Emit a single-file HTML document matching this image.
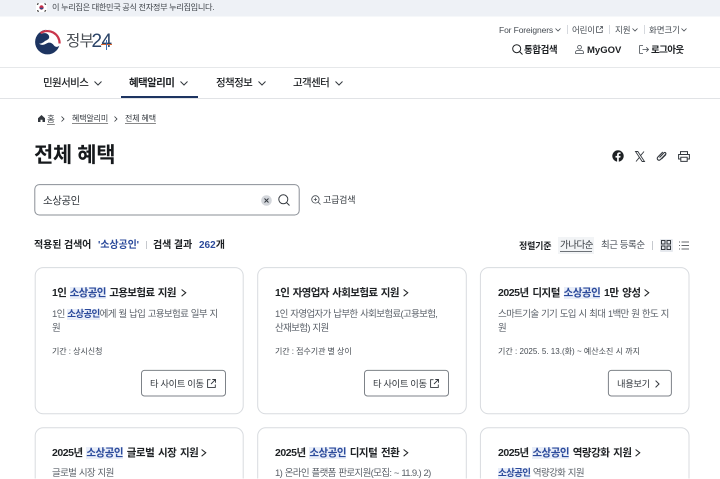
<!DOCTYPE html>
<html lang="ko"><head><meta charset="utf-8"><title>전체 혜택</title>
<style>
*{box-sizing:border-box}
html,body{margin:0;padding:0;width:720px;height:479px;overflow:hidden;background:#fff}
body{position:relative;font-family:"Liberation Sans","Noto Sans CJK KR",sans-serif;color:#1e2124}
#w{position:absolute;left:0;top:0;width:720px;height:479px;overflow:hidden}
.t{position:absolute;white-space:nowrap;line-height:14px;height:14px}
.b{font-weight:700}
.box{position:absolute}
svg{position:absolute;overflow:visible}
.ct{font-size:10.5px;font-weight:700;letter-spacing:-.47px;word-spacing:1.2px;color:#1e2124}
.ct1{letter-spacing:-.6px;word-spacing:1px}
.ds{font-size:9.5px;color:#5a6068;letter-spacing:-.66px;word-spacing:.6px}
.pd{font-size:8px;color:#464c53;letter-spacing:-.05px}
mark{background:#e9eef9;color:#2b4a9b}
.btnt{font-size:9.3px;color:#33383e;letter-spacing:-.35px}
.st{fill:none;stroke:#33383e;stroke-width:1}
.chv{fill:none;stroke:#1e2124;stroke-width:1}
.nv{font-size:10.5px;font-weight:500;color:#1e2124;letter-spacing:-.6px}
</style></head><body><div id="w">
<div class="box" style="left:0;top:0;width:720px;height:16px;background:#eef1f6"></div>
<div class="box" style="left:0;top:16px;width:720px;height:1px;background:#f6f8fa"></div>
<svg style="left:36px;top:3px" width="11" height="9" viewBox="0 0 11 9"><rect width="11" height="9" fill="#fff"/><circle cx="5.5" cy="4.5" r="2.2" fill="#c8304a"/><path d="M3.4 4.8a2.2 2.2 0 0 0 4.2 0z" fill="#2a4a8a"/><path d="M1 1.5l1.5-1M1.2 7.5l1.5 1M8.5.6l1.5 1M8.5 8.4l1.5-1" stroke="#222" stroke-width="1.1"/></svg>
<div class="t" style="left:52px;top:1px;font-size:8.2px;color:#3f444a;letter-spacing:-.36px">이 누리집은 대한민국 공식 전자정부 누리집입니다.</div>

<svg style="left:34px;top:29px" width="27" height="26" viewBox="0 0 27 26">
<circle cx="13.500" cy="13" r="12.400" fill="#1d3461"/>
<path d="M13 .5C20 0 27.500 6 26.500 14C26 18 22 19 20 16.500C18 13.500 15 13 12.500 14.500C10 16 7 16.500 5 14.500C6.500 15 9 14 11 12C13 11 16 10 15 7C14 4 10 3.500 7 5C9 2.500 11 .7 13 .5z" fill="#fff"/>
<path d="M6.500 4.200A12.200 12.200 0 0 1 25.600 14.500" fill="none" stroke="#c9354b" stroke-width="2.200"/>
</svg>
<div class="t" style="left:66px;top:33px;height:18px;line-height:18px;font-size:15.500px;color:#4a4f55;letter-spacing:-.8px">정부</div>
<div class="t" style="left:91.500px;top:32px;height:20px;line-height:20px;font-size:19px;color:#2b4468;letter-spacing:-.6px">24</div>
<div class="box" style="left:101px;top:44px;width:11px;height:1px;background:#d9652f"></div>
<div class="box" style="left:106px;top:40px;width:1px;height:10px;background:#3d6db5"></div>

<div class="t" style="left:499px;top:23px;font-size:8.500px;color:#464c53;letter-spacing:-.12px">For Foreigners</div>
<svg style="left:555px;top:28px" width="6" height="4"><path d="M.5.500l2.500 2.500L5.500.5" fill="none" stroke="#464c53" stroke-width=".8"/></svg>
<div class="box" style="left:567px;top:25px;width:1px;height:9px;background:#d6d9de"></div>
<div class="t" style="left:572px;top:23px;font-size:8.500px;color:#464c53;letter-spacing:-.2px">어린이</div>
<svg style="left:596px;top:26px" width="7" height="7" viewBox="0 0 7 7"><path d="M3 .8H.6v5.600h5.600V4M3.500 3.500L6.400.6M4.200.5h2.300v2.300" fill="none" stroke="#464c53" stroke-width=".8"/></svg>
<div class="box" style="left:609px;top:25px;width:1px;height:9px;background:#d6d9de"></div>
<div class="t" style="left:615px;top:23px;font-size:8.500px;color:#464c53;letter-spacing:-.1px">지원</div>
<svg style="left:632px;top:28px" width="6" height="4"><path d="M.5.500l2.500 2.500L5.500.5" fill="none" stroke="#464c53" stroke-width=".8"/></svg>
<div class="box" style="left:644px;top:25px;width:1px;height:9px;background:#d6d9de"></div>
<div class="t" style="left:649px;top:23px;font-size:8.500px;color:#464c53;letter-spacing:-.1px">화면크기</div>
<svg style="left:681px;top:28px" width="6" height="4"><path d="M.5.500l2.500 2.500L5.500.5" fill="none" stroke="#464c53" stroke-width=".8"/></svg>

<svg style="left:512px;top:44px" width="11" height="11" viewBox="0 0 11 11"><circle cx="4.700" cy="4.700" r="4" fill="none" stroke="#1e2124" stroke-width="1"/><path d="M7.500 7.500l3 3" stroke="#1e2124" stroke-width="1"/></svg>
<div class="t b" style="left:524px;top:44px;font-size:9.500px;letter-spacing:-.45px">통합검색</div>
<svg style="left:575px;top:45px" width="9" height="9" viewBox="0 0 9 9"><circle cx="4.500" cy="2.300" r="1.900" fill="none" stroke="#464c53" stroke-width=".8"/><path d="M.6 8.500V7.400c0-1.300 1-2 2-2h3.800c1 0 2 .7 2 2v1.100z" fill="none" stroke="#464c53" stroke-width=".8"/></svg>
<div class="t b" style="left:587px;top:44px;font-size:9.500px;letter-spacing:0">MyGOV</div>
<svg style="left:639px;top:45px" width="10" height="9" viewBox="0 0 10 9"><path d="M4 .6H.6v7.800H4M3.500 4.500h6M7.300 2.300l2.200 2.200-2.200 2.200" fill="none" stroke="#464c53" stroke-width=".8"/></svg>
<div class="t b" style="left:651px;top:44px;font-size:9.500px;letter-spacing:-.6px">로그아웃</div>

<div class="box" style="left:0;top:67px;width:720px;height:1px;background:#e6e8ea"></div>
<div class="box" style="left:0;top:98px;width:720px;height:1px;background:#e1e3e6"></div>
<div class="box" style="left:121px;top:96px;width:77px;height:2px;background:#1d3461"></div>
<div class="t nv" style="left:43px;top:76px">민원서비스</div>
<svg style="left:94px;top:81px" width="8" height="5"><path d="M.5.500L4 4 7.500.5" class="st"/></svg>
<div class="t b" style="left:129px;top:76px;font-size:10.500px;color:#1e2124;letter-spacing:-.6px">혜택알리미</div>
<svg style="left:180px;top:81px" width="8" height="5"><path d="M.5.500L4 4 7.500.5" class="st"/></svg>
<div class="t nv" style="left:216px;top:76px">정책정보</div>
<svg style="left:257.500px;top:81px" width="8" height="5"><path d="M.5.500L4 4 7.500.5" class="st"/></svg>
<div class="t nv" style="left:293px;top:76px">고객센터</div>
<svg style="left:335px;top:81px" width="8" height="5"><path d="M.5.500L4 4 7.500.5" class="st"/></svg>

<svg style="left:38px;top:115px" width="7" height="7" viewBox="0 0 7 7"><path d="M3.500 0L7 3.200V7H4.500V4.800h-2V7H0V3.200z" fill="#33383e"/></svg>
<div class="t" style="left:47px;top:112px;font-size:8.500px;color:#33383e;text-decoration:underline;text-underline-offset:2px;text-decoration-color:#888">홈</div>
<svg style="left:61px;top:116px" width="4" height="6"><path d="M.5.500L3 3 .5 5.500" fill="none" stroke="#33383e" stroke-width=".8"/></svg>
<div class="t" style="left:72px;top:112px;font-size:8px;color:#33383e;letter-spacing:-.15px;text-decoration:underline;text-underline-offset:2px;text-decoration-color:#888">혜택알리미</div>
<svg style="left:114px;top:116px" width="4" height="6"><path d="M.5.500L3 3 .5 5.500" fill="none" stroke="#33383e" stroke-width=".8"/></svg>
<div class="t" style="left:125px;top:112px;font-size:8px;color:#33383e;letter-spacing:-.15px;text-decoration:underline;text-underline-offset:2px;text-decoration-color:#888">전체 혜택</div>

<div class="t b" style="left:34px;top:143px;height:26px;line-height:26px;font-size:21px;color:#16191c;letter-spacing:-.4px">전체 혜택</div>

<svg style="left:612px;top:150px" width="12" height="12" viewBox="0 0 12 12"><circle cx="6" cy="6" r="5.700" fill="#1e2124"/><path d="M6.800 12V7.600h1.500l.3-1.700H6.800V4.800c0-.5.200-.9.900-.9h.9V2.500c-1.900-.3-3.500 0-3.500 2.100v1.300H3.500v1.700h1.600V12z" fill="#fff"/></svg>
<svg style="left:635px;top:151px" width="10" height="11" viewBox="0 0 10 11"><path d="M.5.500h2.300l6.700 10H7.200zM9 .5L5.500 4.700M4.500 6.300L1 10.500" fill="none" stroke="#33383e" stroke-width=".9"/></svg>
<svg style="left:656px;top:150px" width="12" height="12" viewBox="0 0 12 12"><path d="M3.500 7.500L8 2.800c1-1 2.600.4 1.500 1.600L4.500 9.500c-1.900 1.900-4.500-.5-2.600-2.500L6.800 2" fill="none" stroke="#33383e" stroke-width="1.100"/><path d="M5.500 9l4.500-4.500" stroke="#33383e" stroke-width="1"/></svg>
<svg style="left:678px;top:151px" width="12" height="11" viewBox="0 0 12 11"><path d="M2.500 3.500V.6h7v2.900M2.500 8H.6V3.500h10.800V8H9.500M2.800 6.200h6.400v4.200H2.800z" fill="none" stroke="#33383e" stroke-width="1"/></svg>

<svg style="left:0;top:0" width="720" height="479">
<rect x="34.800" y="184.600" width="264.400" height="30.400" rx="4.500" fill="#fff" stroke="#8a8f96"/>
<g fill="#fff" stroke="#d8dbdf">
<rect x="35.200" y="267.600" width="208" height="146.200" rx="8"/>
<rect x="257.700" y="267.600" width="208.600" height="146.200" rx="8"/>
<rect x="480.400" y="267.600" width="208.600" height="146.200" rx="8"/>
<path d="M35.200 478.500V435.800a8 8 0 0 1 8-8H235.200a8 8 0 0 1 8 8V478.500"/>
<path d="M257.700 478.500V435.800a8 8 0 0 1 8-8H458.300a8 8 0 0 1 8 8V478.500"/>
<path d="M480.400 478.500V435.800a8 8 0 0 1 8-8H681a8 8 0 0 1 8 8V478.500"/>
</g>
<g fill="#fff" stroke="#7d8288">
<rect x="141.500" y="370.400" width="84" height="25.600" rx="3"/>
<rect x="364.500" y="370.400" width="84" height="25.600" rx="3"/>
<rect x="608.400" y="370.400" width="63" height="25.600" rx="3"/>
</g>
</svg>

<div class="t" style="left:43px;top:194px;font-size:10.500px;color:#33383e;letter-spacing:-.45px">소상공인</div>
<svg style="left:261px;top:195px" width="11" height="11" viewBox="0 0 11 11"><circle cx="5.500" cy="5.500" r="5.300" fill="#d3d6db"/><path d="M3.500 3.500l4 4M7.500 3.500l-4 4" stroke="#33383e" stroke-width="1"/></svg>
<svg style="left:278px;top:194px" width="12" height="12" viewBox="0 0 12 12"><circle cx="5.300" cy="5.300" r="4.500" fill="none" stroke="#33383e" stroke-width="1"/><path d="M8.500 8.500l3 3" stroke="#33383e" stroke-width="1"/></svg>
<svg style="left:311px;top:195px" width="10" height="10" viewBox="0 0 10 10"><circle cx="4.400" cy="4.400" r="3.700" fill="none" stroke="#464c53" stroke-width=".8"/><path d="M7 7l2.500 2.500M2.800 4.400h3.200M4.400 2.800V6" stroke="#464c53" stroke-width=".8"/></svg>
<div class="t" style="left:323px;top:193px;font-size:9px;color:#33383e;letter-spacing:-.2px">고급검색</div>

<div class="t" style="left:34px;top:239px;font-size:10px;font-weight:700;color:#1e2124;letter-spacing:-.1px">적용된 검색어</div>
<div class="t" style="left:98px;top:239px;font-size:10px;font-weight:700;color:#2b4a9b;letter-spacing:-.1px">'소상공인'</div>
<div class="box" style="left:146px;top:241px;width:1px;height:8px;background:#c6c9ce"></div>
<div class="t" style="left:153px;top:239px;font-size:10px;font-weight:700;color:#1e2124;letter-spacing:-.1px">검색 결과</div>
<div class="t" style="left:199px;top:239px;font-size:10px;font-weight:700;color:#2b4a9b;letter-spacing:0">262<span style="color:#1e2124">개</span></div>

<div class="t b" style="left:519px;top:239px;font-size:9px;letter-spacing:-.2px">정렬기준</div>
<div class="box" style="left:558px;top:237px;width:36px;height:17px;background:#f2f4f6"></div>
<div class="t" style="left:560px;top:239px;font-size:9.500px;color:#33383e;letter-spacing:-.5px">가나다순</div>
<div class="box" style="left:560px;top:251px;width:32px;height:1px;background:#6d7278"></div>
<div class="t" style="left:601px;top:239px;font-size:9.500px;color:#4a5058;letter-spacing:-.45px">최근 등록순</div>
<div class="box" style="left:652px;top:241px;width:1px;height:9px;background:#c6c9ce"></div>
<div class="box" style="left:660px;top:239px;width:13px;height:13px;background:#e6e9ee;border-radius:1px"></div>
<svg style="left:661px;top:240px" width="10" height="10" viewBox="0 0 10 10"><path d="M.5.500h3.500v3.500H.5zM6 .5h3.500v3.500H6zM.5 6h3.500v3.500H.5zM6 6h3.500v3.500H6z" fill="none" stroke="#33383e"/></svg>
<svg style="left:679px;top:241px" width="10" height="9" viewBox="0 0 10 9"><path d="M2.500 1H10M2.500 4.500H10M2.500 8H10M0 1h1M0 4.500h1M0 8h1" fill="none" stroke="#33383e" stroke-width=".8"/></svg>

<div class="t ct ct1" style="left:52px;top:286px">1인 <mark>소상공인</mark> 고용보험료 지원</div>
<svg style="left:181px;top:289px" width="6" height="8"><path d="M.6.500L4.800 3.800.6 7.200" class="chv"/></svg>
<div class="t ds" style="left:52px;top:308px">1인 <mark style="font-weight:700">소상공인</mark>에게 월 납입 고용보험료 일부 지</div>
<div class="t ds" style="left:52px;top:322px">원</div>
<div class="t pd" style="left:52px;top:345px">기간 : 상시신청</div>
<div class="t btnt" style="left:150px;top:377px">타 사이트 이동</div>
<svg style="left:207px;top:379px" width="9" height="9" viewBox="0 0 9 9"><path d="M3.500.7H.6v7.700h7.700V5.500M4 5L8.300.7M5.300.5h3.200v3.200" fill="none" stroke="#33383e" stroke-width=".9"/></svg>

<div class="t ct ct1" style="left:275px;top:286px">1인 자영업자 사회보험료 지원</div>
<svg style="left:403px;top:289px" width="6" height="8"><path d="M.6.500L4.800 3.800.6 7.200" class="chv"/></svg>
<div class="t ds" style="left:275px;top:308px">1인 자영업자가 납부한 사회보험료(고용보험,</div>
<div class="t ds" style="left:275px;top:322px">산재보험) 지원</div>
<div class="t pd" style="left:275px;top:345px">기간 : 접수기관 별 상이</div>
<div class="t btnt" style="left:373px;top:377px">타 사이트 이동</div>
<svg style="left:430px;top:379px" width="9" height="9" viewBox="0 0 9 9"><path d="M3.500.7H.6v7.700h7.700V5.500M4 5L8.300.7M5.300.5h3.200v3.200" fill="none" stroke="#33383e" stroke-width=".9"/></svg>

<div class="t ct" style="left:498px;top:286px">2025년 디지털 <mark>소상공인</mark> 1만 양성</div>
<svg style="left:644px;top:289px" width="6" height="8"><path d="M.6.500L4.800 3.800.6 7.200" class="chv"/></svg>
<div class="t ds" style="left:498px;top:308px">스마트기술 기기 도입 시 최대 1백만 원 한도 지</div>
<div class="t ds" style="left:498px;top:322px">원</div>
<div class="t pd" style="left:498px;top:345px;letter-spacing:.02px">기간 : 2025. 5. 13.(화) ~ 예산소진 시 까지</div>
<div class="t btnt" style="left:617px;top:377px">내용보기</div>
<svg style="left:655px;top:380px" width="5" height="8"><path d="M.6.600L4 4 .6 7.400" class="st"/></svg>

<div class="t ct" style="left:52px;top:446px">2025년 <mark>소상공인</mark> 글로벌 시장 지원</div>
<svg style="left:201px;top:449px" width="6" height="8"><path d="M.6.500L4.800 3.800.6 7.200" class="chv"/></svg>
<div class="t ds" style="left:52px;top:467px;height:12px;overflow:hidden">글로벌 시장 지원</div>

<div class="t ct" style="left:275px;top:446px">2025년 <mark>소상공인</mark> 디지털 전환</div>
<svg style="left:403px;top:449px" width="6" height="8"><path d="M.6.500L4.800 3.800.6 7.200" class="chv"/></svg>
<div class="t ds" style="left:275px;top:467px;height:12px;overflow:hidden">1) 온라인 플랫폼 판로지원(모집: ~ 11.9.) 2)</div>

<div class="t ct" style="left:498px;top:446px">2025년 <mark>소상공인</mark> 역량강화 지원</div>
<svg style="left:635px;top:449px" width="6" height="8"><path d="M.6.500L4.800 3.800.6 7.200" class="chv"/></svg>
<div class="t ds" style="left:498px;top:467px;height:12px;overflow:hidden"><mark style="font-weight:700">소상공인</mark> 역량강화 지원</div>
</div></body></html>
